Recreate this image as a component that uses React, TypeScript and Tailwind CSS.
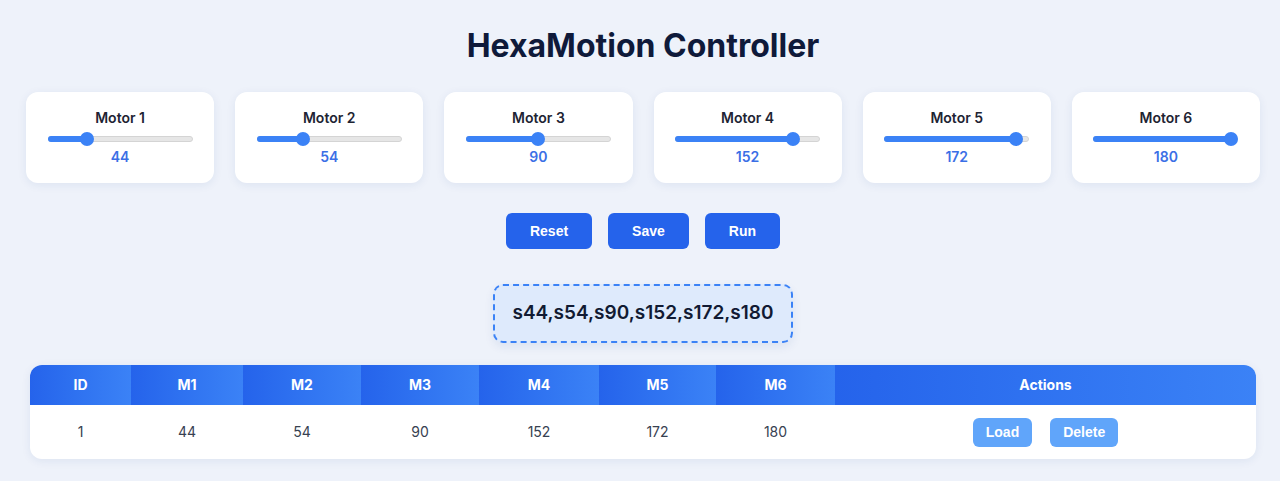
import React, { useState } from 'react';

const MAX = 180;

const cols = [
  { name: 'ID', w: 'w-[101px]' },
  { name: 'M1', w: 'w-[112px]' },
  { name: 'M2', w: 'w-[118px]' },
  { name: 'M3', w: 'w-[118px]' },
  { name: 'M4', w: 'w-[120px]' },
  { name: 'M5', w: 'w-[117px]' },
  { name: 'M6', w: 'w-[119px]' },
  { name: 'Actions', w: '' },
];

const MotorSlider: React.FC<{ value: number }> = ({ value }) => {
  const pct = value / MAX;
  // thumb travels inside the track, 7px from each end
  const left = `calc(7px + (100% - 14px) * ${pct})`;
  return (
    <div className="relative mx-auto mt-1 h-[14px] w-[145px]">
      <div className="absolute left-0 right-0 top-[4px] h-[6px] rounded-full border border-[#d4d4d4] bg-[#e6e6e6]" />
      <div
        className="absolute left-0 top-[4px] h-[6px] rounded-full bg-[#3b82f6]"
        style={{ width: left }}
      />
      <div
        className="absolute top-0 h-[14px] w-[14px] -translate-x-1/2 rounded-full bg-[#3b82f6]"
        style={{ left }}
      />
    </div>
  );
};

const App: React.FC = () => {
  const [motors] = useState([44, 54, 90, 152, 172, 180]);
  const command = motors.map((m) => `s${m}`).join(',');

  return (
    <div
      className="min-h-screen bg-[#eef2fa] pl-[6px] pt-7 text-[#0f172a]"
      style={{ fontFamily: 'Inter, "Noto Sans", sans-serif' }}
    >
      <h1 className="text-center text-[32px] font-bold leading-9 text-[#0f1a3a]">
        HexaMotion Controller
      </h1>

      {/* Motor cards */}
      <div className="mt-7 grid grid-cols-6 gap-[21px] px-5">
        {motors.map((m, i) => (
          <div
            key={i}
            className="rounded-xl bg-white px-4 pb-4 pt-4 text-center shadow-[0_2px_10px_rgba(30,58,138,0.08)]"
          >
            <div className="text-sm font-semibold leading-5 text-[#1e2433]">Motor {i + 1}</div>
            <MotorSlider value={m} />
            <div className="mt-px text-sm font-semibold leading-5 text-[#3b6fe6]">{m}</div>
          </div>
        ))}
      </div>

      {/* Buttons */}
      <div
        className="mt-[30px] flex justify-center gap-4"
        style={{ fontFamily: '"Liberation Sans", Arial, sans-serif' }}
      >
        {['Reset', 'Save', 'Run'].map((b) => (
          <button
            key={b}
            className="h-9 rounded-md bg-[#2563eb] px-6 text-sm font-bold text-white"
          >
            {b}
          </button>
        ))}
      </div>

      {/* Command string */}
      <div className="mt-[35px] flex justify-center">
        <div className="flex h-[59px] items-center rounded-[10px] border-2 border-dashed border-[#3b82f6] bg-[#deeafc] px-[17px] text-[19px] font-semibold text-[#111a33] shadow-[0_4px_10px_rgba(30,58,138,0.08)]">
          {command}
        </div>
      </div>

      {/* Saved positions */}
      <div className="mt-[22px] px-6 pb-6">
        <div className="overflow-hidden rounded-xl bg-white shadow-[0_2px_10px_rgba(30,58,138,0.08)]">
          <table className="w-full border-collapse text-sm">
            <thead>
              <tr>
                {cols.map((c) => (
                  <th
                    key={c.name}
                    className={`${c.w} h-10 bg-gradient-to-r from-[#2563eb] to-[#3b82f6] text-center font-bold text-white`}
                  >
                    {c.name}
                  </th>
                ))}
              </tr>
            </thead>
            <tbody>
              <tr className="h-[54px] text-center text-[#374151]">
                <td>1</td>
                {motors.map((m, i) => (
                  <td key={i}>{m}</td>
                ))}
                <td>
                  <div
                    className="flex justify-center gap-[18px]"
                    style={{ fontFamily: '"Liberation Sans", Arial, sans-serif' }}
                  >
                    <button className="h-[29px] rounded-md bg-[#60a5fa] px-[13px] text-sm font-bold text-white">
                      Load
                    </button>
                    <button className="h-[29px] rounded-md bg-[#60a5fa] px-[13px] text-sm font-bold text-white">
                      Delete
                    </button>
                  </div>
                </td>
              </tr>
            </tbody>
          </table>
        </div>
      </div>
    </div>
  );
};

export default App;
